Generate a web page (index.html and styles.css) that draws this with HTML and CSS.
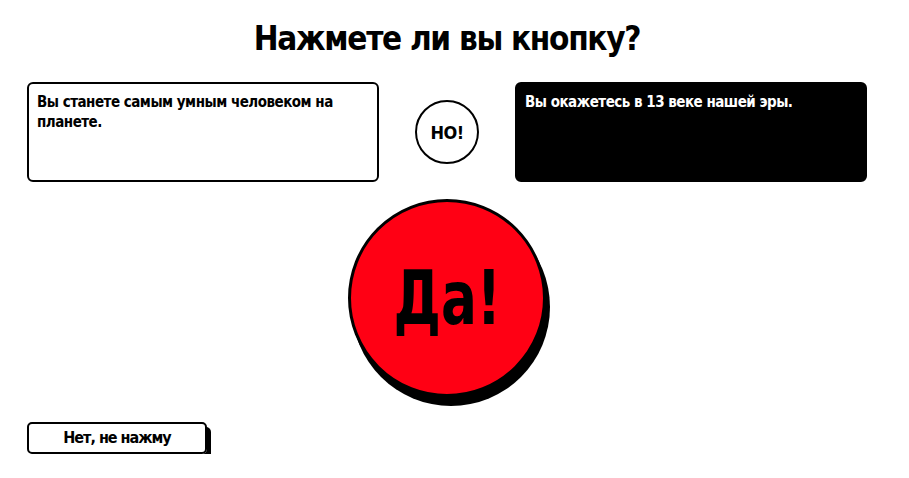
FILE: index.html
```html
<!DOCTYPE html>
<html lang="ru">
<head>
<meta charset="UTF-8">
<meta name="viewport" content="width=device-width, initial-scale=1.0">
<title>Нажмете ли вы кнопку?</title>
<link rel="stylesheet" href="styles.css">
</head>
<body>
<div id="wrap">
    <h1 class="title">Нажмете ли вы кнопку?</h1>
    <div class="choices">
        <div class="card">Вы станете самым умным человеком на планете.</div>
        <div class="but">НО!</div>
        <div class="card dark">Вы окажетесь в 13 веке нашей эры.</div>
    </div>
    <div class="yes-row">
        <a href="javascript:;" class="yes"><span>Да!</span></a>
    </div>
    <a href="javascript:;" class="no">Нет, не нажму</a>
</div>
</body>
</html>
```

FILE: styles.css
```css
body {
    margin: 0;
    background: #fff;
    color: #000;
    font-family: "Liberation Sans Narrow", "DejaVu Sans Condensed", "DejaVu Sans", sans-serif;
    font-stretch: condensed;
}
#wrap {
    width: 840px;
    margin-left: 27px;
}
.title {
    margin: 0;
    padding-top: 18px;
    height: 82px;
    box-sizing: border-box;
    font-size: 33px;
    line-height: 42px;
    letter-spacing: -1.3px;
    font-weight: bold;
    text-align: center;
}
.choices {
    display: flex;
    justify-content: space-between;
    align-items: center;
}
.card {
    box-sizing: border-box;
    width: 352px;
    height: 100px;
    padding: 8px 8px;
    border: 2px solid #000;
    border-radius: 6px;
    font-size: 15px;
    line-height: 20px;
    letter-spacing: -0.5px;
    font-weight: bold;
}
.card.dark {
    background: #000;
    color: #fff;
}
.but {
    display: flex;
    justify-content: center;
    align-items: center;
    box-sizing: border-box;
    width: 64px;
    height: 64px;
    border: 2px solid #000;
    border-radius: 50%;
    font-size: 18px;
    letter-spacing: -0.5px;
    font-weight: bold;
}
.yes-row {
    display: flex;
    justify-content: center;
    padding-top: 17px;
}
.yes {
    display: flex;
    justify-content: center;
    align-items: center;
    box-sizing: border-box;
    width: 198px;
    height: 198px;
    border: 3px solid #000;
    border-radius: 50%;
    background: #ff0014;
    box-shadow: 4px 9px 0 #000;
    color: #000;
    text-decoration: none;
    font-size: 74px;
    font-weight: bold;
}
.yes span {
    display: inline-block;
    transform: scaleX(0.8);
}
.no {
    display: block;
    box-sizing: border-box;
    width: 180px;
    height: 32px;
    margin-top: 25px;
    border: 2px solid #000;
    border-radius: 5px;
    box-shadow: 4px 5px 0 #000;
    color: #000;
    text-decoration: none;
    text-align: center;
    font-size: 16px;
    line-height: 28px;
    letter-spacing: -1px;
    font-weight: bold;
}
```
